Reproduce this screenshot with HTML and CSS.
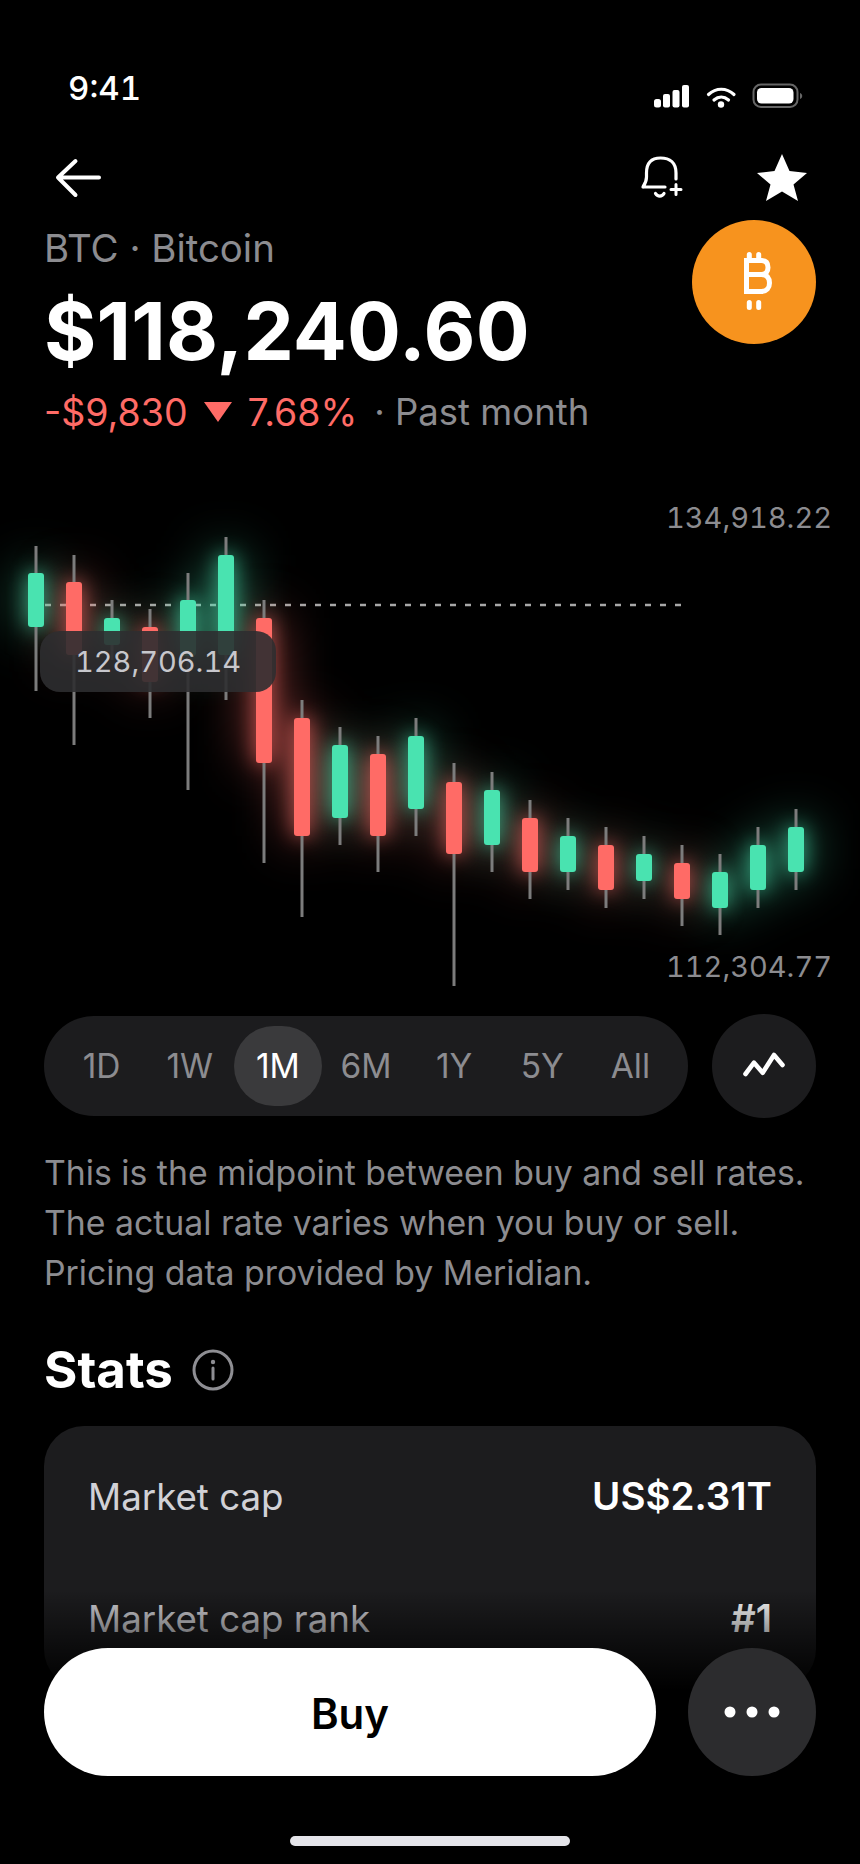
FILE: index.html
```html
<!DOCTYPE html>
<html lang="en">
<head>
<meta charset="utf-8">
<title>Bitcoin</title>
<link rel="stylesheet" href="styles.css">
</head>
<body>
<div class="screen">
  <div class="status">
    <span class="time">9:41</span>
    <svg class="status-icons" width="150" height="26" viewBox="654 83 150 26" aria-hidden="true">
      <rect x="654" y="99" width="7" height="8.5" rx="2.5" fill="#fff"/>
      <rect x="663" y="94" width="7" height="13.5" rx="2" fill="#fff"/>
      <rect x="672.500" y="90" width="7" height="17.500" rx="2" fill="#fff"/>
      <rect x="682" y="85" width="7" height="22.500" rx="2" fill="#fff"/>
      <path d="M708.500 94.500C716 87.500 726.500 87.500 734 94.500" fill="none" stroke="#fff" stroke-width="3.200" stroke-linecap="round"/>
      <path d="M714 100C718.500 96 724 96 728.500 100" fill="none" stroke="#fff" stroke-width="3.200" stroke-linecap="round"/>
      <circle cx="721" cy="104.500" r="3.200" fill="#fff"/>
      <rect x="753.500" y="84.500" width="44" height="22.500" rx="7.500" fill="none" stroke="#666" stroke-width="2"/>
      <rect x="757" y="88" width="36.500" height="15.500" rx="4.500" fill="#fff"/>
      <path d="M800 93v6c1.500-.6 2.200-1.600 2.200-3s-.7-2.400-2.200-3z" fill="#666"/>
    </svg>
  </div>

  <nav class="nav">
    <svg class="icon-back" width="48" height="40" viewBox="54 158 48 40" aria-hidden="true">
      <path d="M99 177.500H58M75.500 161 58 177.500 75.500 195" fill="none" stroke="#fff" stroke-width="4" stroke-linecap="round" stroke-linejoin="round"/>
    </svg>
    <div class="nav-actions">
      <svg width="44" height="46" viewBox="641 156 44 46" aria-hidden="true">
        <path d="M645 188H667M678 180V174C678 164 672 159 662.500 159S648.500 164.500 648.500 174V178C648.500 182 647 185 645 188" fill="none" stroke="#fff" stroke-width="3.200" stroke-linecap="round" stroke-linejoin="round"/>
        <path d="M657.500 194.500C659.500 198 664 198 666 194.500" fill="none" stroke="#fff" stroke-width="3.200" stroke-linecap="round"/>
        <path d="M678 185.500V195.500M673 190.500H683" fill="none" stroke="#fff" stroke-width="3" stroke-linecap="round"/>
      </svg>
      <svg width="52" height="48" viewBox="756 154 52 48" aria-hidden="true">
        <path d="M782 154 789.500 171 807 173 793.500 184.500 798 201 782 191.500 766 201 770.500 184.500 757 173 774.500 171z" fill="#fff"/>
      </svg>
    </div>
  </nav>

  <header class="asset">
    <div class="asset-text">
      <div class="asset-name">BTC · Bitcoin</div>
      <div class="price">$118,240.60</div>
      <div class="change">
        <span class="loss">-$9,830</span>
        <svg class="tri" width="28" height="20" viewBox="0 0 28 20" aria-hidden="true"><path d="M0 0H28L14 20z" fill="#ff6b66"/></svg>
        <span class="loss">7.68%</span>
        <span class="period">· Past month</span>
      </div>
    </div>
    <div class="coin">
      <svg width="40" height="64" viewBox="734 250 40 64" aria-hidden="true">
        <path d="M749.300 254.500V258M758.700 254.500V258M749.300 302.500V307.500M758.700 302.500V307.500" fill="none" stroke="#fff" stroke-width="5" stroke-linecap="round"/>
        <path d="M746.500 260.500H761.500C766.500 260.500 768 263.500 768 267.500S766 274.500 761.500 274.500H746.500M761.500 274.500C767 274.500 769.500 278 769.500 283S766.500 291.500 761.500 291.500H746.500M746.500 258V294" fill="none" stroke="#fff" stroke-width="5"/>
      </svg>
    </div>
  </header>

  <section class="chart">
    <svg class="chart-svg" width="860" height="500" viewBox="0 500 860 500" aria-hidden="true">
      <defs>
        <g id="bodies-up">
          <rect x="28" y="573" width="16" height="54" rx="3"/>
          <rect x="104" y="618" width="16" height="27" rx="3"/>
          <rect x="180" y="600" width="16" height="56" rx="3"/>
          <rect x="218" y="555" width="16" height="100" rx="3"/>
          <rect x="332" y="745" width="16" height="73" rx="3"/>
          <rect x="408" y="736" width="16" height="73" rx="3"/>
          <rect x="484" y="790" width="16" height="55" rx="3"/>
          <rect x="560" y="836" width="16" height="36" rx="3"/>
          <rect x="636" y="854" width="16" height="27" rx="3"/>
          <rect x="712" y="872" width="16" height="36" rx="3"/>
          <rect x="750" y="845" width="16" height="45" rx="3"/>
          <rect x="788" y="827" width="16" height="45" rx="3"/>
        </g>
        <g id="bodies-down">
          <rect x="66" y="582" width="16" height="73" rx="3"/>
          <rect x="142" y="627" width="16" height="55" rx="3"/>
          <rect x="256" y="618" width="16" height="145" rx="3"/>
          <rect x="294" y="718" width="16" height="118" rx="3"/>
          <rect x="370" y="754" width="16" height="82" rx="3"/>
          <rect x="446" y="782" width="16" height="72" rx="3"/>
          <rect x="522" y="818" width="16" height="54" rx="3"/>
          <rect x="598" y="845" width="16" height="45" rx="3"/>
          <rect x="674" y="863" width="16" height="36" rx="3"/>
        </g>
      </defs>
      <line class="mid" x1="45" y1="605" x2="683" y2="605"/>
      <use href="#bodies-up" class="haze up"/>
      <use href="#bodies-down" class="haze down"/>
      <use href="#bodies-up" class="glow up"/>
      <use href="#bodies-down" class="glow down"/>
      <g class="wicks">
        <rect x="34.500" y="546" width="3" height="145"/>
        <rect x="72.500" y="555" width="3" height="190"/>
        <rect x="110.500" y="600" width="3" height="60"/>
        <rect x="148.500" y="609" width="3" height="109"/>
        <rect x="186.500" y="573" width="3" height="217"/>
        <rect x="224.500" y="537" width="3" height="163"/>
        <rect x="262.500" y="600" width="3" height="263"/>
        <rect x="300.500" y="700" width="3" height="217"/>
        <rect x="338.500" y="727" width="3" height="118"/>
        <rect x="376.500" y="736" width="3" height="136"/>
        <rect x="414.500" y="718" width="3" height="118"/>
        <rect x="452.500" y="763" width="3" height="223"/>
        <rect x="490.500" y="772" width="3" height="100"/>
        <rect x="528.500" y="800" width="3" height="99"/>
        <rect x="566.500" y="818" width="3" height="72"/>
        <rect x="604.500" y="827" width="3" height="81"/>
        <rect x="642.500" y="836" width="3" height="63"/>
        <rect x="680.500" y="845" width="3" height="81"/>
        <rect x="718.500" y="854" width="3" height="81"/>
        <rect x="756.500" y="827" width="3" height="81"/>
        <rect x="794.500" y="809" width="3" height="81"/>
      </g>
      <use href="#bodies-up" class="up"/>
      <use href="#bodies-down" class="down"/>
    </svg>
    <span class="axis axis-high">134,918.22</span>
    <span class="axis axis-low">112,304.77</span>
    <span class="bubble">128,706.14</span>
  </section>

  <div class="controls">
    <div class="ranges">
      <span class="range">1D</span>
      <span class="range">1W</span>
      <span class="range is-active">1M</span>
      <span class="range">6M</span>
      <span class="range">1Y</span>
      <span class="range">5Y</span>
      <span class="range">All</span>
    </div>
    <div class="chart-toggle">
      <svg width="48" height="32" viewBox="740 1050 48 32" aria-hidden="true">
        <path d="M745.500 1074 754 1062.700 762.700 1072.700 774 1055 782.500 1065" fill="none" stroke="#fff" stroke-width="4.600" stroke-linecap="round" stroke-linejoin="round"/>
      </svg>
    </div>
  </div>

  <p class="note">This is the midpoint between buy and sell rates.<br>The actual rate varies when you buy or sell.<br>Pricing data provided by Meridian.</p>

  <h2 class="stats-title">Stats
    <svg width="42" height="42" viewBox="0 0 42 42" aria-hidden="true">
      <circle cx="21" cy="21" r="19" fill="none" stroke="#8e8e93" stroke-width="3"/>
      <circle cx="21" cy="13" r="2.200" fill="#8e8e93"/>
      <path d="M21 19V30" stroke="#8e8e93" stroke-width="3" stroke-linecap="round"/>
    </svg>
  </h2>

  <div class="card">
    <div class="row"><span class="row-label">Market cap</span><span class="row-value">US$2.31T</span></div>
    <div class="row"><span class="row-label">Market cap rank</span><span class="row-value">#1</span></div>
  </div>

  <footer class="dock">
    <div class="dock-actions">
      <button class="buy" type="button">Buy</button>
      <button class="more" type="button" aria-label="More">
        <svg width="56" height="12" viewBox="0 0 56 12" aria-hidden="true">
          <circle cx="6" cy="6" r="5.500" fill="#fff"/><circle cx="28" cy="6" r="5.500" fill="#fff"/><circle cx="50" cy="6" r="5.500" fill="#fff"/>
        </svg>
      </button>
    </div>
    <div class="home"></div>
  </footer>
</div>
</body>
</html>
```
FILE: styles.css
```css
* { box-sizing: border-box; }
html, body { margin: 0; padding: 0; background: #000; }
body { font-family: Inter, "Liberation Sans", sans-serif; color: #fff; }
svg { display: block; }

.screen { position: relative; width: 860px; height: 1864px; overflow: hidden; background: #000; }

.status { display: flex; justify-content: space-between; align-items: center; height: 60px; margin-top: 60px; padding: 0 56px 0 68px; }
.time { margin-top: -4px; font-size: 33px; font-weight: 500; line-height: 36px; font-variant-numeric: tabular-nums; }
.status-icons { margin-top: 12px; }

.nav { display: flex; justify-content: space-between; align-items: center; height: 50px; margin-top: 33px; padding: 0 52px 0 54px; }
.nav-actions { display: flex; align-items: center; gap: 73px; }

.asset { display: flex; justify-content: space-between; align-items: flex-start; margin-top: 17px; padding: 0 44px; }
.asset-name { font-size: 38.400px; line-height: 56px; color: #8c8c90; }
.price { font-size: 80px; font-weight: 700; line-height: 92px; letter-spacing: .2px; margin-top: 9px; }
.change { display: flex; align-items: center; gap: 16px; height: 56px; font-size: 37.500px; margin-top: 7px; }
.loss { color: #ff6b66; }
.period { color: #8c8c90; margin-left: 1px; font-size: 36.500px; }
.coin { display: flex; align-items: center; justify-content: center; width: 124px; height: 124px; border-radius: 50%; background: #f7931e; }

.chart { position: relative; height: 500px; margin-top: 60px; }
.chart-svg { overflow: visible; }
.mid { stroke: #a8a8a8; stroke-width: 2.500; stroke-dasharray: 6 9; }
.up { fill: #49e3b0; }
.down { fill: #ff6b66; }
.wicks { fill: #7c7c7c; }
.glow { filter: blur(10px); opacity: .7; }
.haze { filter: blur(26px); }
.axis { position: absolute; right: 28px; font-size: 29px; line-height: 36px; color: #8c8c90; font-variant-numeric: tabular-nums; }
.axis-high { top: 0; }
.axis-low { top: 449px; }
.bubble { position: absolute; left: 40px; top: 131px; width: 236px; height: 61px; border-radius: 20px; background: rgba(46, 46, 48, .9); color: #c7c7cc; font-size: 29px; line-height: 61px; text-align: center; font-variant-numeric: tabular-nums; }

.controls { display: flex; align-items: center; gap: 24px; margin-top: 14px; padding: 0 44px; }
.ranges { display: flex; flex: 1; align-items: center; height: 100px; padding: 0 13.500px; border-radius: 50px; background: #1c1c1e; }
.range { flex: 1; height: 80px; border-radius: 40px; font-size: 33.500px; line-height: 80px; text-align: center; color: #8c8c90; }
.is-active { background: #3a3a3c; color: #fff; }
.chart-toggle { display: flex; align-items: center; justify-content: center; width: 104px; height: 104px; border-radius: 50%; background: #1c1c1e; }

.note { margin: 30px 0 0; padding: 0 44px; font-size: 33.800px; line-height: 50px; color: #8c8c90; }

.stats-title { display: flex; align-items: center; gap: 19px; margin: 42px 0 0; padding: 0 44px; height: 60px; font-size: 51px; font-weight: 700; line-height: 60px; }

.card { margin: 26px 44px 0; padding: 9px 44px 10px; border-radius: 40px; background: #1c1c1e; }
.row { display: flex; justify-content: space-between; align-items: center; height: 122px; font-size: 36.700px; }
.row-label { color: #d1d1d6; }
.row-value { font-size: 38.500px; font-weight: 600; }

.dock { position: absolute; left: 0; right: 0; bottom: 0; display: flex; flex-direction: column; height: 274px; padding: 58px 44px 0; background: linear-gradient(to bottom, rgba(0,0,0,0) 0, #000 100px); }
.dock-actions { display: flex; gap: 32px; }
.buy { flex: 1; height: 128px; padding: 2px 0 0; border: 0; border-radius: 64px; background: #fff; color: #000; font: 600 42px Inter, "Liberation Sans", sans-serif; }
.more { display: flex; align-items: center; justify-content: center; width: 128px; height: 128px; border: 0; padding: 0; border-radius: 50%; background: #2c2c2e; }
.home { width: 280px; height: 10px; margin: 60px auto 0; border-radius: 5px; background: #e5e5ea; }
```
